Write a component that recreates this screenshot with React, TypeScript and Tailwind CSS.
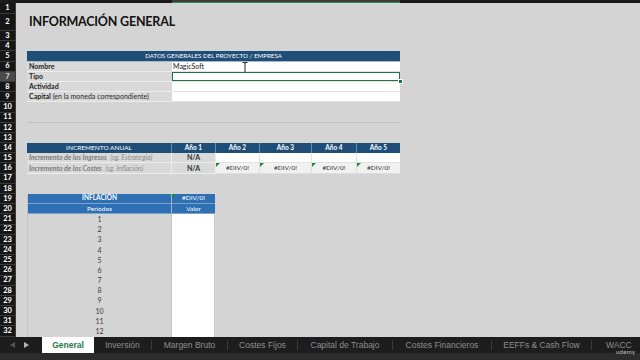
import React from "react";

type RowProps = {
  n: number;
  h?: string;
  sel?: boolean;
  children?: React.ReactNode;
};

// one spreadsheet row: black row header + content
function Row({ n, h = "h-[10.2px]", sel = false, children }: RowProps) {
  return (
    <div className={`flex ${h}`}>
      <div
        className={`w-[16px] shrink-0 flex items-center justify-center border-b border-r border-[#3a3a3a] text-[7.5px] font-bold leading-none ${
          sel ? "bg-[#4a4a4a] text-[#cfcfcf]" : "bg-[#161616] text-white"
        }`}
      >
        {n}
      </div>
      <div className="flex-1 flex pl-[11px] min-w-0">{children}</div>
    </div>
  );
}

type CellProps = {
  w: string;
  className?: string;
  children?: React.ReactNode;
};

function Cell({ w, className = "", children }: CellProps) {
  return (
    <div className={`${w} shrink-0 h-full flex items-center leading-none whitespace-nowrap ${className}`}>
      {children}
    </div>
  );
}

// small green error triangle in the top-left corner of a cell
const Flag = () => (
  <span className="absolute left-0 top-0 w-0 h-0 border-t-[4px] border-r-[4px] border-t-[#1f8a3c] border-r-transparent" />
);

const tabs: { label: string; w: string }[] = [
  { label: "Inversión", w: "w-[58px]" },
  { label: "Margen Bruto", w: "w-[76px]" },
  { label: "Costes Fijos", w: "w-[70px]" },
  { label: "Capital de Trabajo", w: "w-[95px]" },
  { label: "Costes Financieros", w: "w-[99px]" },
  { label: "EEFFs & Cash Flow", w: "w-[100px]" },
];

export default function App() {
  const labelCell = "bg-[#d9d9d9] border-b border-[#ececec] pl-[2px] text-[7px] text-[#1f1f1f]";
  const valueCell = "bg-white border-b border-[#e3e3e3]";
  const blueHead = "bg-[#1f4e79] text-white text-[6.5px] justify-center border-r border-[#6f8aa8]";
  const inflHead = "bg-[#2e70b3] text-white text-[6.5px] justify-center border-b border-[#7ea3cb]";
  const divCell = "relative bg-[#f1f1f1] border-b border-[#dedede] justify-center text-[6.5px] text-[#333]";

  return (
    <div className="w-[640px] h-[360px] overflow-hidden bg-[#d4d4d4] font-['Lato',sans-serif] flex flex-col">
      {/* column header strip */}
      <div className="h-[3px] flex bg-[#1a1a1a] shrink-0">
        <div className="w-[172px] shrink-0" />
        <div className="w-[228px] shrink-0 bg-[#3c3c3c] border-b border-[#2e8b4e]" />
      </div>

      <div className="flex-1 flex flex-col min-h-0">
        <Row n={1} h="h-[10.5px]" />
        <Row n={2} h="h-[17.5px]">
          <div className="pl-[2px] flex items-center text-[12.5px] font-bold text-[#111] tracking-[-0.2px]">
            INFORMACIÓN GENERAL
          </div>
        </Row>
        <Row n={3} />
        <Row n={4} />
        <Row n={5}>
          <Cell w="w-[373px]" className="bg-[#1f4e79] text-white text-[6.2px] justify-center border-b border-[#a9b9ca]">
            DATOS GENERALES DEL PROYECTO / EMPRESA
          </Cell>
        </Row>
        <Row n={6}>
          <Cell w="w-[145px]" className={`${labelCell} font-bold`}>
            Nombre
          </Cell>
          <Cell w="w-[228px]" className={`${valueCell} relative pl-[1px] text-[7px] text-[#222]`}>
            MagicSoft
            <svg className="absolute left-[70px] top-[0px]" width="6" height="11" viewBox="0 0 6 11">
              <path d="M0.5 0.5h2v0.5h1v-0.5h2M3 1v9M0.5 10.5h2v-0.5h1v0.5h2" fill="none" stroke="#fff" strokeWidth="2" />
              <path d="M0.5 0.5h2v0.5h1v-0.5h2M3 1v9M0.5 10.5h2v-0.5h1v0.5h2" fill="none" stroke="#111" strokeWidth="0.9" />
            </svg>
          </Cell>
        </Row>
        <Row n={7} sel>
          <Cell w="w-[145px]" className={`${labelCell} font-bold`}>
            Tipo
          </Cell>
          <Cell w="w-[228px]" className={`${valueCell} relative`}>
            <div className="absolute inset-0 border-[1.5px] border-[#217346]" />
            <div className="absolute right-[-3px] bottom-[-3px] w-[5px] h-[5px] bg-[#217346] border border-white" />
          </Cell>
        </Row>
        <Row n={8}>
          <Cell w="w-[145px]" className={`${labelCell} font-bold`}>
            Actividad
          </Cell>
          <Cell w="w-[228px]" className={valueCell} />
        </Row>
        <Row n={9}>
          <Cell w="w-[145px]" className={labelCell}>
            <span className="font-bold">Capital</span>
            <span>&nbsp;(en la moneda correspondiente)</span>
          </Cell>
          <Cell w="w-[228px]" className={valueCell} />
        </Row>
        <Row n={10} />
        <Row n={11}>
          <Cell w="w-[373px]" className="border-b border-[#c1c1c1]" />
        </Row>
        <Row n={12} />
        <Row n={13} />
        <Row n={14}>
          <Cell w="w-[145px]" className={blueHead}>
            INCREMENTO ANUAL
          </Cell>
          <Cell w="w-[44px]" className={`${blueHead} font-bold`}>Año 1</Cell>
          <Cell w="w-[44px]" className={`${blueHead} font-bold`}>Año 2</Cell>
          <Cell w="w-[52px]" className={`${blueHead} font-bold`}>Año 3</Cell>
          <Cell w="w-[45px]" className={`${blueHead} font-bold`}>Año 4</Cell>
          <Cell w="w-[43px]" className={`${blueHead} font-bold border-r-0`}>Año 5</Cell>
        </Row>
        <Row n={15}>
          <Cell w="w-[145px]" className="bg-[#d9d9d9] border-b border-r border-[#ececec] pl-[2px] text-[7px] italic text-[#7c7c7c]">
            <span className="font-bold">Incremento de los Ingresos</span>
            <span className="text-[#8c8c8c]">&nbsp;&nbsp;(sg. Estrategia)</span>
          </Cell>
          <Cell w="w-[44px]" className="bg-[#d9d9d9] border-b border-r border-[#ececec] justify-center text-[7px] font-bold text-[#333]">
            N/A
          </Cell>
          <Cell w="w-[44px]" className="bg-white border-b border-r border-[#e3e3e3]" />
          <Cell w="w-[52px]" className="bg-white border-b border-r border-[#e3e3e3]" />
          <Cell w="w-[45px]" className="bg-white border-b border-r border-[#e3e3e3]" />
          <Cell w="w-[43px]" className="bg-white border-b border-[#e3e3e3]" />
        </Row>
        <Row n={16}>
          <Cell w="w-[145px]" className="bg-[#d9d9d9] border-b border-r border-[#ececec] pl-[2px] text-[7px] italic text-[#7c7c7c]">
            <span className="font-bold">Incremento de los Costes</span>
            <span className="text-[#8c8c8c]">&nbsp;&nbsp;(sg. Inflación)</span>
          </Cell>
          <Cell w="w-[44px]" className="bg-[#d9d9d9] border-b border-r border-[#ececec] justify-center text-[7px] font-bold text-[#333]">
            N/A
          </Cell>
          <Cell w="w-[44px]" className={`${divCell} border-r`}>
            <Flag />#DIV/0!
          </Cell>
          <Cell w="w-[52px]" className={`${divCell} border-r`}>
            <Flag />#DIV/0!
          </Cell>
          <Cell w="w-[45px]" className={`${divCell} border-r`}>
            <Flag />#DIV/0!
          </Cell>
          <Cell w="w-[43px]" className={divCell}>
            <Flag />#DIV/0!
          </Cell>
        </Row>
        <Row n={17} />
        <Row n={18} />
        <Row n={19}>
          <Cell w="w-[145px]" className={`${inflHead} font-bold border-l border-l-[#c4c4c4] border-r border-r-[#9fb6cf]`}>
            INFLACIÓN
          </Cell>
          <Cell w="w-[43px]" className={`${inflHead} relative`}>
            <Flag />#DIV/0!
          </Cell>
        </Row>
        <Row n={20}>
          <Cell w="w-[145px]" className={`${inflHead} border-l border-l-[#c4c4c4] border-r border-r-[#9fb6cf]`}>
            Períodos
          </Cell>
          <Cell w="w-[43px]" className={inflHead}>
            Valor
          </Cell>
        </Row>
        {[1, 2, 3, 4, 5, 6, 7, 8, 9, 10, 11, 12].map((p, i) => (
          <Row key={p} n={21 + i}>
            <Cell w="w-[145px]" className="border-l border-r border-[#c4c4c4] justify-center text-[7px] text-[#3a3a3a]">
              {p}
            </Cell>
            <Cell w="w-[43px]" className="bg-white border-r border-[#c8c8c8]" />
          </Row>
        ))}
      </div>

      {/* sheet tabs */}
      <div className="relative h-[16px] shrink-0 flex bg-[#1d1d1d] font-['Liberation_Sans',Arial,sans-serif]">
        <div className="w-[42px] shrink-0 flex items-center pl-[10px] gap-[9px]">
          <span className="w-0 h-0 border-y-[3.5px] border-y-transparent border-r-[5px] border-r-[#555]" />
          <span className="w-0 h-0 border-y-[3.5px] border-y-transparent border-l-[5px] border-l-[#b5b5b5]" />
        </div>
        <div className="w-[52px] shrink-0 bg-white flex items-center justify-center text-[8.5px] font-bold text-[#1e7a45]">
          General
        </div>
        {tabs.map((t) => (
          <div key={t.label} className={`${t.w} shrink-0 flex items-center`}>
            <div className="flex-1 text-center text-[8.5px] text-[#8d8d8d]">{t.label}</div>
            <span className="w-px h-[10px] bg-[#3d3d3d]" />
          </div>
        ))}
        <div className="flex-1 flex items-center pl-[14px] text-[8.5px] text-[#8d8d8d]">WACC</div>
        <span className="absolute right-[5px] bottom-[-4px] text-[6.5px] text-[#bdbdbd] font-['Lato',sans-serif]">
          udemy
        </span>
      </div>
      <div className="h-[7px] shrink-0 bg-[#2c2c2c]" />
    </div>
  );
}
